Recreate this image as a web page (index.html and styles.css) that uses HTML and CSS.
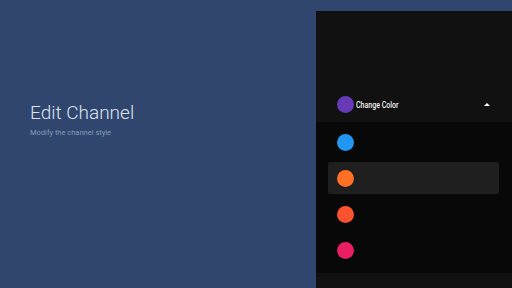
FILE: index.html
```html
<!DOCTYPE html>
<html>
<head>
<meta charset="utf-8">
<link rel="stylesheet" href="styles.css">
</head>
<body>
<div class="screen">
  <div class="intro">
    <h1 class="title">Edit Channel</h1>
    <p class="subtitle">Modify the channel style</p>
  </div>
  <div class="panel">
    <div class="panel-head">
      <div class="picker">
        <span class="dot purple"></span>
        <span class="picker-label"><span class="picker-text">Change Color</span></span>
        <span class="caret"></span>
      </div>
    </div>
    <div class="options">
      <div class="option"><span class="dot blue"></span></div>
      <div class="option active"><span class="dot orange"></span></div>
      <div class="option"><span class="dot deep-orange"></span></div>
      <div class="option"><span class="dot pink"></span></div>
    </div>
    <div class="panel-foot"></div>
  </div>
</div>
</body>
</html>
```
FILE: styles.css
```css
html, body {
  margin: 0;
  padding: 0;
  width: 512px;
  height: 288px;
  overflow: hidden;
  background: #30466f;
  font-family: Roboto, "Noto Sans", sans-serif;
}
.screen {
  display: flex;
  width: 512px;
  height: 288px;
}
.intro {
  width: 316px;
  flex: none;
  padding: 99px 0 0 30px;
  box-sizing: border-box;
}
.title {
  margin: 0;
  font-size: 19px;
  font-weight: 300;
  color: #dde3ee;
  line-height: 28px;
}
.subtitle {
  margin: 1px 0 0;
  font-size: 7.5px;
  color: #8a98b8;
  line-height: 10px;
}
.panel {
  flex: 1;
  margin-top: 11px;
  display: flex;
  flex-direction: column;
  background: #111111;
}
.panel-head {
  height: 111px;
  display: flex;
  flex-direction: column;
  justify-content: flex-end;
}
.picker {
  height: 36px;
  display: flex;
  align-items: center;
  padding: 0 21px;
}
.picker-label {
  margin-left: 2px;
  flex: 1;
  line-height: 12px;
}
.picker-text {
  display: inline-block;
  font-size: 9.5px;
  font-weight: 500;
  color: #f2f2f2;
  transform: scaleX(0.74);
  transform-origin: left center;
  white-space: nowrap;
}
.caret {
  width: 0;
  height: 0;
  border-left: 3px solid transparent;
  border-right: 3px solid transparent;
  border-bottom: 3.5px solid #ffffff;
  margin-right: 1px;
}
.options {
  height: 151px;
  background: #080808;
  padding: 4px 13px 0 12px;
  box-sizing: border-box;
  display: flex;
  flex-direction: column;
  gap: 4px;
}
.option {
  height: 32px;
  display: flex;
  align-items: center;
  padding-left: 9px;
  border-radius: 2px;
}
.option.active {
  background: #1f1f1f;
}
.panel-foot {
  flex: 1;
  background: #111111;
}
.dot {
  width: 17px;
  height: 17px;
  border-radius: 50%;
  flex: none;
}
.purple { background: #673ab7; }
.blue { background: #2196f3; }
.orange { background: #ff7024; }
.deep-orange { background: #fb5330; }
.pink { background: #e91e63; }
```
